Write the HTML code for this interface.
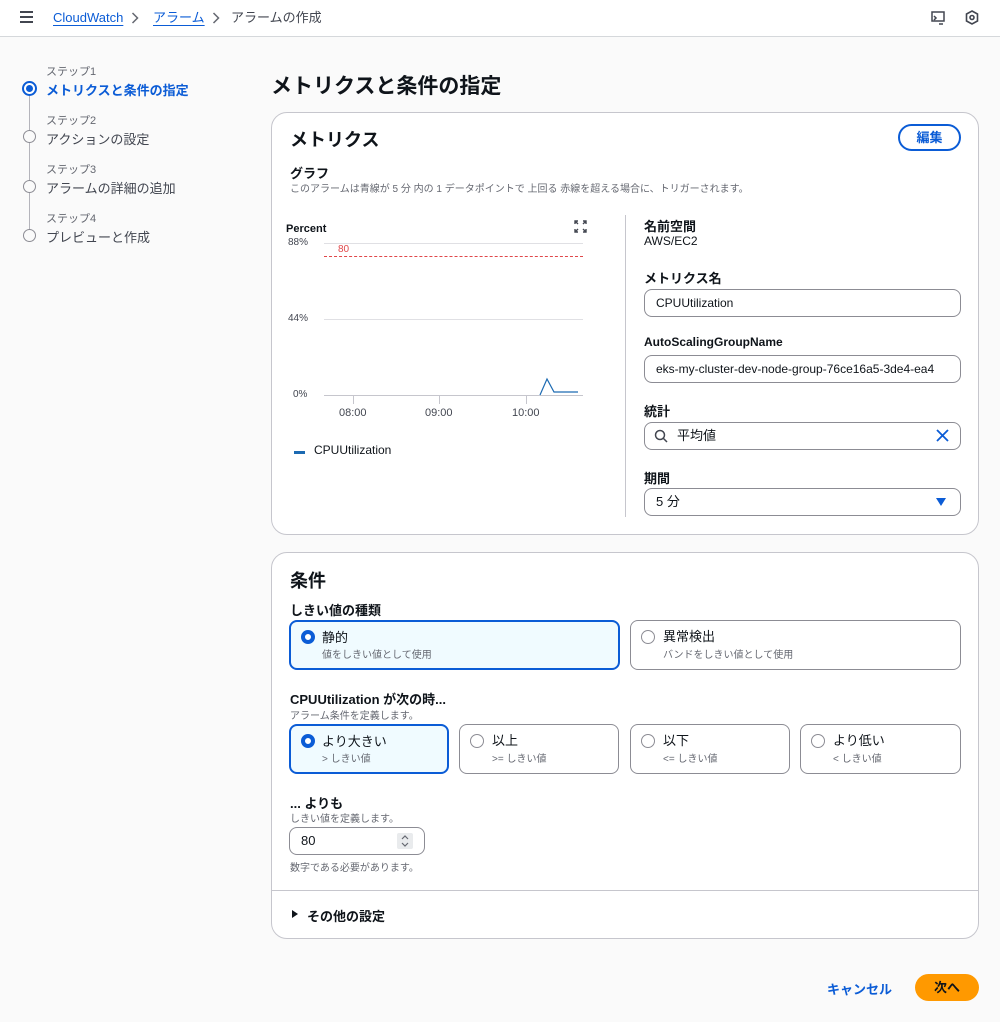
<!DOCTYPE html>
<html><head><meta charset="utf-8"><style>
*{box-sizing:border-box;margin:0;padding:0}
body{width:1000px;height:1022px;background:#fafafa;font-family:"Liberation Sans","Noto Sans CJK JP",sans-serif;color:#0f141a;position:relative;overflow:hidden;font-size:13px}
.a{position:absolute;white-space:nowrap}
.top{position:absolute;left:0;top:0;width:1000px;height:37px;background:#fff;border-bottom:1px solid #d5d8db}
.link{color:#0b5cd6;text-decoration:underline;text-underline-offset:3px}
.card{position:absolute;background:#fff;border:1px solid #c6c6cd;border-radius:16px}
.lbl{font-weight:bold;font-size:13px}
.sub{font-size:10px;color:#656871}
.inp{position:absolute;border:1px solid #8c8c94;border-radius:8px;height:28px;background:#fff;padding:0 11px;line-height:26px;font-size:13px}
.tile{position:absolute;border:1px solid #8c8c94;border-radius:8px;background:#fff;height:50px}
.tile.sel{border:2px solid #0b5cd6;background:#f0fbff}
.rad{position:absolute;left:10px;top:9px;width:14px;height:14px;border-radius:50%;border:1.5px solid #8c8c94;background:#fff}
.sel .rad{border:4px solid #0b5cd6;left:10px;top:8px}
.tt{position:absolute;left:32px;top:5px;font-size:13px}
.sel .tt{left:31px}
.ts{position:absolute;left:32px;top:25px;font-size:10px;color:#656871}
.sel .ts{left:31px;top:24px}
.step{position:absolute;left:46px;font-size:13px;color:#424650}
.stepn{position:absolute;left:46px;font-size:11px;color:#656871}
.circ{position:absolute;left:23px;width:13px;height:13px;border-radius:50%;border:1.5px solid #8c8c94;background:#fafafa}
</style></head><body>
<div class="top">
 <div class="a" style="left:20px;top:11px;width:13px;height:2px;background:#424650;box-shadow:0 5px 0 #424650,0 10px 0 #424650"></div>
 <div class="a link" style="left:53px;top:10px;font-size:13px;line-height:16px">CloudWatch</div>
 <svg class="a" style="left:131px;top:12px" width="8" height="12" viewBox="0 0 8 12" fill="none" stroke="#656871" stroke-width="1.5"><path d="M1.5 1l5 5-5 5"/></svg>
 <div class="a link" style="left:153px;top:10px;font-size:13px;line-height:16px">アラーム</div>
 <svg class="a" style="left:212px;top:12px" width="8" height="12" viewBox="0 0 8 12" fill="none" stroke="#656871" stroke-width="1.5"><path d="M1.5 1l5 5-5 5"/></svg>
 <div class="a" style="left:231px;top:10px;font-size:13px;line-height:16px;color:#424650">アラームの作成</div>
 <svg class="a" style="left:931px;top:11px" width="14" height="14" viewBox="0 0 14 14" fill="none" stroke="#424650" stroke-width="1.5"><rect x="1" y="1" width="12" height="9"/><path d="M3 5l2 2-2 2M8 13h4"/></svg>
 <svg class="a" style="left:965px;top:10px" width="14" height="15" viewBox="0 0 14 15" fill="none" stroke="#424650" stroke-width="1.6"><path d="M7 1l5.5 3v7L7 14 1.5 11V4z"/><circle cx="7" cy="7.5" r="2"/></svg>
</div>
<div class="a" style="left:29px;top:96px;width:1px;height:142px;background:#b4b4bb"></div>
<div class="stepn" style="top:63px">ステップ1</div>
<div class="a" style="left:22px;top:81px;width:15px;height:15px;border-radius:50%;border:2px solid #0b5cd6;background:#fff"></div>
<div class="a" style="left:26px;top:85px;width:7px;height:7px;border-radius:50%;background:#0b5cd6"></div>
<div class="step" style="top:80px;color:#0b5cd6;font-weight:bold">メトリクスと条件の指定</div>
<div class="stepn" style="top:112px">ステップ2</div><div class="circ" style="top:130px"></div><div class="step" style="top:129px">アクションの設定</div>
<div class="stepn" style="top:161px">ステップ3</div><div class="circ" style="top:180px"></div><div class="step" style="top:178px">アラームの詳細の追加</div>
<div class="stepn" style="top:210px">ステップ4</div><div class="circ" style="top:229px"></div><div class="step" style="top:227px">プレビューと作成</div>

<div class="a" style="left:271px;top:70px;font-size:21px;font-weight:bold">メトリクスと条件の指定</div>

<div class="card" style="left:271px;top:112px;width:708px;height:423px">
 <div class="a" style="left:18px;top:13px;font-size:18px;font-weight:bold">メトリクス</div>
 <div class="a" style="left:626px;top:11px;width:63px;height:27px;border:2px solid #0b5cd6;border-radius:14px;color:#0b5cd6;font-weight:bold;font-size:13px;text-align:center;line-height:23px">編集</div>
 <div class="a lbl" style="left:18px;top:50px">グラフ</div>
 <div class="a sub" style="left:18px;top:67px">このアラームは青線が 5 分 内の 1 データポイントで 上回る 赤線を超える場合に、トリガーされます。</div>
 <div class="a lbl" style="left:14px;top:110px;font-size:11px">Percent</div>
 <svg class="a" style="left:302px;top:107px" width="13" height="13" viewBox="0 0 13 13" fill="none" stroke="#424650" stroke-width="1.4"><path d="M1 4V1h3M9 1h3v3M12 9v3H9M4 12H1V9M1 1l3 3M12 1L9 4M12 12L9 9M1 12l3-3"/></svg>
 <div class="a" style="left:16px;top:124px;font-size:10px;color:#424650">88%</div>
 <div class="a" style="left:16px;top:200px;font-size:10px;color:#424650">44%</div>
 <div class="a" style="left:21px;top:276px;font-size:10px;color:#424650">0%</div>
 <div class="a" style="left:52px;top:130px;width:259px;height:1px;background:#e0e0e4"></div>
 <div class="a" style="left:52px;top:206px;width:259px;height:1px;background:#e0e0e4"></div>
 <div class="a" style="left:52px;top:282px;width:259px;height:1px;background:#c6c6cd"></div>
 <div class="a" style="left:52px;top:143px;width:259px;border-top:1px dashed #e0474a"></div>
 <div class="a" style="left:66px;top:131px;font-size:10px;color:#e0474a">80</div>
 <div class="a" style="left:81px;top:283px;width:1px;height:8px;background:#c6c6cd"></div>
 <div class="a" style="left:167px;top:283px;width:1px;height:8px;background:#c6c6cd"></div>
 <div class="a" style="left:254px;top:283px;width:1px;height:8px;background:#c6c6cd"></div>
 <div class="a" style="left:67px;top:294px;font-size:11px;color:#424650">08:00</div>
 <div class="a" style="left:153px;top:294px;font-size:11px;color:#424650">09:00</div>
 <div class="a" style="left:240px;top:294px;font-size:11px;color:#424650">10:00</div>
 <svg class="a" style="left:0;top:0" width="320" height="300"><polyline points="268,282 275,266 282,279 306,279" fill="none" stroke="#1c6ab2" stroke-width="1.2"/></svg>
 <div class="a" style="left:22px;top:338px;width:11px;height:3px;background:#1c6ab2"></div>
 <div class="a" style="left:42px;top:330px;font-size:12px">CPUUtilization</div>
 <div class="a" style="left:353px;top:102px;width:1px;height:302px;background:#c6c6cd"></div>
 <div class="a lbl" style="left:372px;top:103px">名前空間</div>
 <div class="a" style="left:372px;top:121px;font-size:12px">AWS/EC2</div>
 <div class="a lbl" style="left:372px;top:155px">メトリクス名</div>
 <div class="inp" style="left:372px;top:176px;width:317px;font-size:12px">CPUUtilization</div>
 <div class="a lbl" style="left:372px;top:222px;font-size:12px">AutoScalingGroupName</div>
 <div class="inp" style="left:372px;top:242px;width:317px;font-size:12px;overflow:hidden">eks-my-cluster-dev-node-group-76ce16a5-3de4-ea4</div>
 <div class="a lbl" style="left:372px;top:288px">統計</div>
 <div class="inp" style="left:372px;top:309px;width:317px;padding-left:32px">平均値</div>
 <svg class="a" style="left:382px;top:316px" width="14" height="14" viewBox="0 0 14 14" fill="none" stroke="#424650" stroke-width="1.5"><circle cx="6" cy="6" r="4.5"/><path d="M9.5 9.5L13 13"/></svg>
 <svg class="a" style="left:664px;top:316px" width="13" height="13" viewBox="0 0 13 13" stroke="#0b5cd6" stroke-width="1.8"><path d="M1 1l11 11M12 1L1 12"/></svg>
 <div class="a lbl" style="left:372px;top:355px">期間</div>
 <div class="inp" style="left:372px;top:375px;width:317px">5 分</div>
 <div class="a" style="left:664px;top:385px;width:0;height:0;border-left:5px solid transparent;border-right:5px solid transparent;border-top:8px solid #0b5cd6"></div>
</div>

<div class="card" style="left:271px;top:552px;width:708px;height:387px">
 <div class="a" style="left:18px;top:14px;font-size:18px;font-weight:bold">条件</div>
 <div class="a lbl" style="left:18px;top:47px">しきい値の種類</div>
 <div class="tile sel" style="left:17px;top:67px;width:331px"><div class="rad"></div><div class="tt">静的</div><div class="ts">値をしきい値として使用</div></div>
 <div class="tile" style="left:358px;top:67px;width:331px"><div class="rad"></div><div class="tt">異常検出</div><div class="ts">バンドをしきい値として使用</div></div>
 <div class="a lbl" style="left:18px;top:136px">CPUUtilization が次の時...</div>
 <div class="a sub" style="left:18px;top:154px">アラーム条件を定義します。</div>
 <div class="tile sel" style="left:17px;top:171px;width:160px"><div class="rad"></div><div class="tt">より大きい</div><div class="ts">&gt; しきい値</div></div>
 <div class="tile" style="left:187px;top:171px;width:160px"><div class="rad"></div><div class="tt">以上</div><div class="ts">&gt;= しきい値</div></div>
 <div class="tile" style="left:358px;top:171px;width:160px"><div class="rad"></div><div class="tt">以下</div><div class="ts">&lt;= しきい値</div></div>
 <div class="tile" style="left:528px;top:171px;width:161px"><div class="rad"></div><div class="tt">より低い</div><div class="ts">&lt; しきい値</div></div>
 <div class="a lbl" style="left:18px;top:240px">... よりも</div>
 <div class="a sub" style="left:18px;top:257px">しきい値を定義します。</div>
 <div class="inp" style="left:17px;top:274px;width:136px">80</div>
 <div class="a" style="left:125px;top:280px;width:16px;height:16px;background:#e9ebed;border-radius:2px"></div>
 <svg class="a" style="left:128px;top:281px" width="10" height="14" viewBox="0 0 10 14" fill="none" stroke="#656871" stroke-width="1.2"><path d="M2 5l3-3 3 3M2 9l3 3 3-3"/></svg>
 <div class="a sub" style="left:18px;top:306px">数字である必要があります。</div>
 <div class="a" style="left:0;top:337px;width:706px;height:1px;background:#c6c6cd"></div>
 <div class="a" style="left:20px;top:357px;width:0;height:0;border-top:4px solid transparent;border-bottom:4px solid transparent;border-left:6px solid #0f141a"></div>
 <div class="a lbl" style="left:35px;top:353px">その他の設定</div>
</div>

<div class="a" style="left:827px;top:979px;font-size:13px;font-weight:bold;color:#0b5cd6">キャンセル</div>
<div class="a" style="left:915px;top:974px;width:64px;height:27px;border-radius:14px;background:#ff9900;font-size:13px;font-weight:bold;text-align:center;line-height:27px">次へ</div>
</body></html>
